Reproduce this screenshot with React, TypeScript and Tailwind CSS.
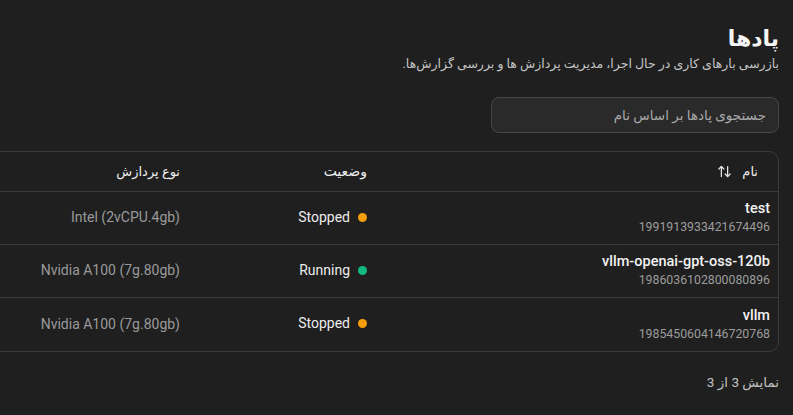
import React from "react";
import { ArrowUpDown } from "lucide-react";

const rows = [
  { name: "test", id: "1991913933421674496", status: "Stopped", type: "Intel (2vCPU.4gb)" },
  { name: "vllm-openai-gpt-oss-120b", id: "1986036102800080896", status: "Running", type: "Nvidia A100 (7g.80gb)" },
  { name: "vllm", id: "1985450604146720768", status: "Stopped", type: "Nvidia A100 (7g.80gb)" },
];

export default function App() {
  return (
    <div
      dir="rtl"
      className="w-[793px] h-[415px] overflow-hidden bg-[#1f1f1f] text-white"
      style={{ fontFamily: "Roboto, 'DejaVu Sans', sans-serif" }}
    >
      <div className="pr-[14px] pt-[24px]">
        <h1 className="text-[22px] font-bold leading-[30px] text-[#f5f5f5]">پادها</h1>
        <p className="text-[12.5px] leading-[18px] text-[#c4c4c4] mt-[1px]">
          بازرسی بارهای کاری در حال اجرا، مدیریت پردازش ها و بررسی گزارش‌ها.
        </p>
        <div className="mt-[24px] w-[288px] h-[36px] rounded-[8px] border border-[#464646] bg-[#2a2a2a] flex items-center px-[12px]">
          <span className="text-[13.5px] text-[#a8a8a8]">جستجوی پادها بر اساس نام</span>
        </div>
        <div className="mt-[18px] w-[1000px] rounded-[10px] border border-[#3c3c3c]">
          <div className="flex h-[40px] items-center border-b border-[#3c3c3c]">
            <div className="w-[403px] px-[8px]">
              <div className="flex items-center gap-[10px] px-[12px] text-[13px] font-medium text-[#eeeeee]">
                <span>نام</span>
                <ArrowUpDown size={15} strokeWidth={2} className="text-[#e5e5e5]" />
              </div>
            </div>
            <div className="w-[187px] px-[8px] text-[14px] font-medium text-[#eeeeee]">وضعیت</div>
            <div className="flex-1 px-[8px] text-[13px] font-medium text-[#eeeeee]">نوع پردازش</div>
          </div>
          {rows.map((r, i) => (
            <div
              key={r.id}
              className={`flex h-[53px] items-center ${i < rows.length - 1 ? "border-b border-[#3c3c3c]" : ""}`}
            >
              <div className="w-[403px] px-[8px] flex flex-col -mt-[2px]">
                <span dir="ltr" className="text-right text-[14.5px] font-medium leading-[19px] text-[#f2f2f2]">{r.name}</span>
                <span dir="ltr" className="text-right text-[12.3px] leading-[16px] text-[#9c9c9c] mt-[1px]">{r.id}</span>
              </div>
              <div className="w-[187px] px-[8px] flex items-center gap-[8px] -mt-[2px]">
                <span
                  className={`w-[9px] h-[9px] rounded-full ${r.status === "Running" ? "bg-[#10b981]" : "bg-[#f59e0b]"}`}
                />
                <span className="text-[14px] text-[#ececec]">{r.status}</span>
              </div>
              <div className="flex-1 px-[8px] -mt-[2px]">
                <span dir="ltr" className="text-[14px] text-[#9a9a9a]">{r.type}</span>
              </div>
            </div>
          ))}
        </div>
        <div className="mt-[20px] text-[13.5px] text-[#c0c0c0]">نمایش 3 از 3</div>
      </div>
    </div>
  );
}
